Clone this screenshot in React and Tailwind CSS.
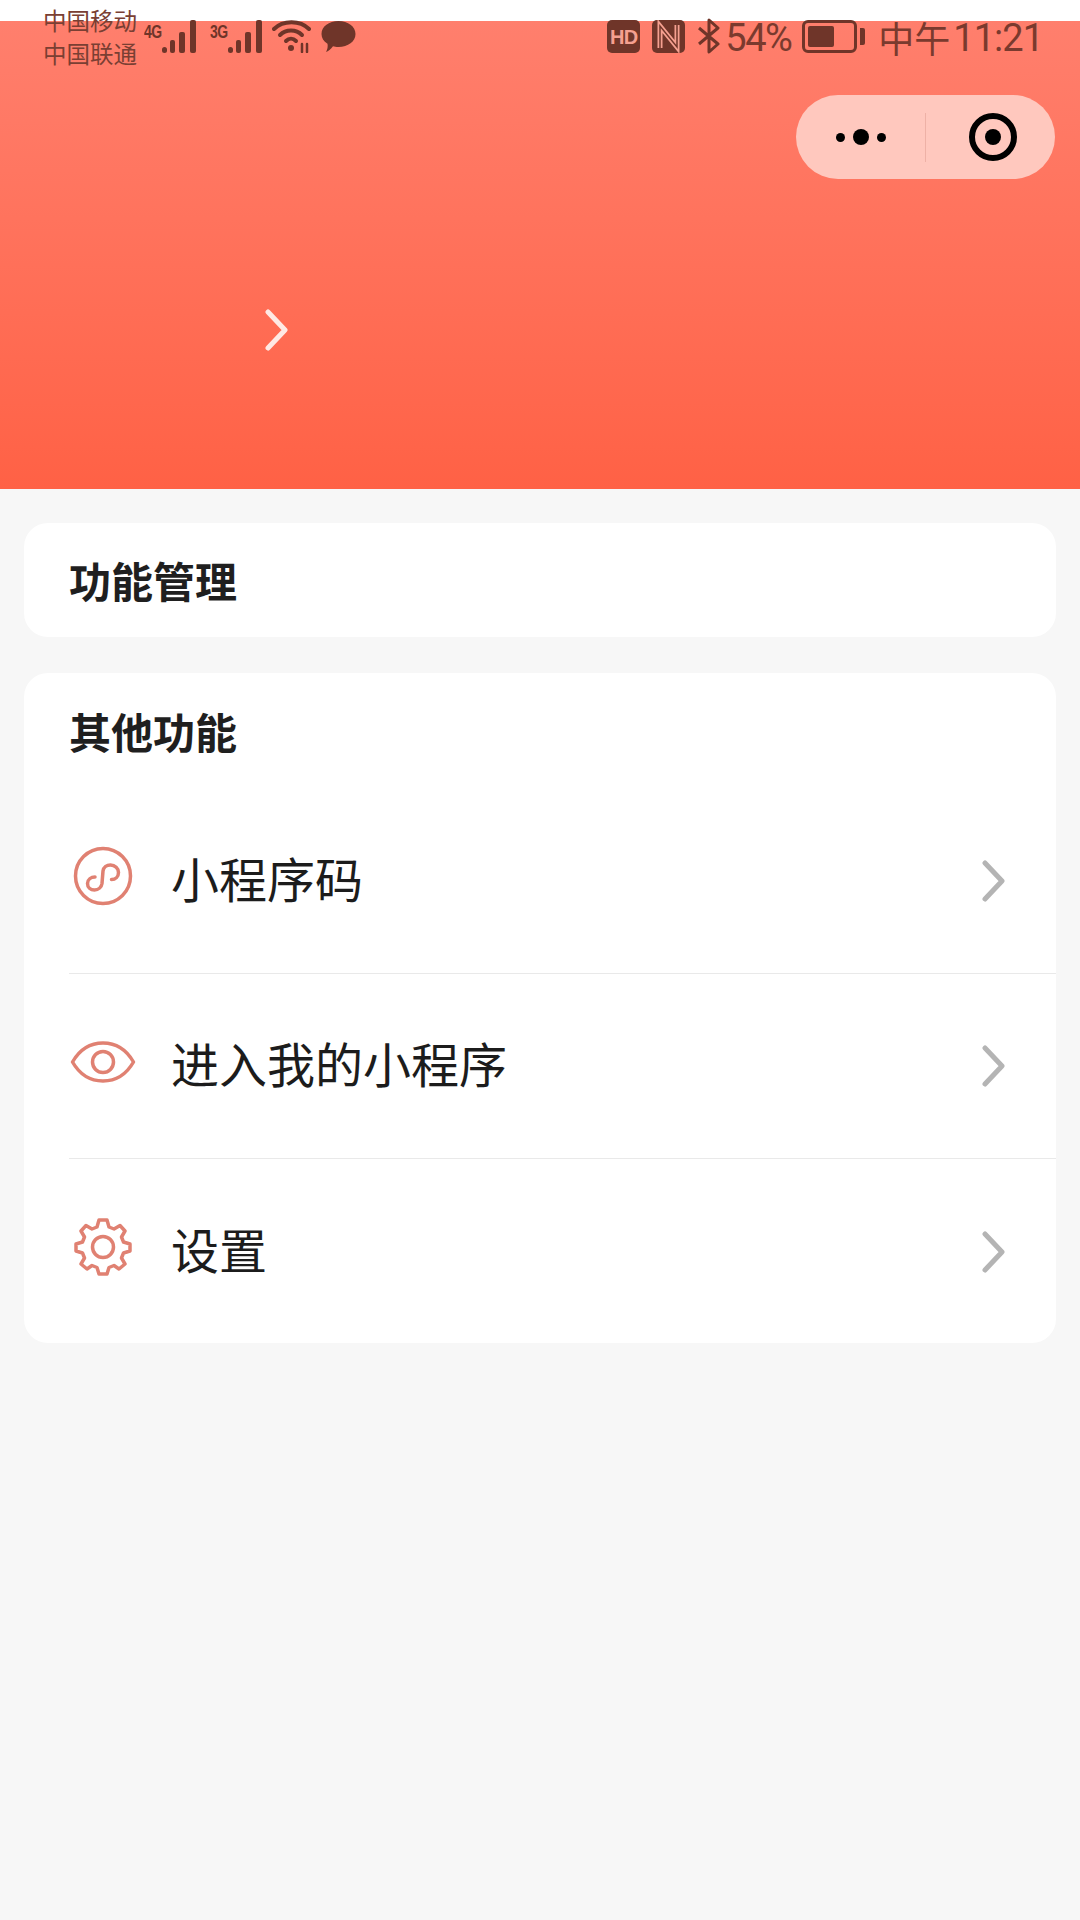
const cjk = { fontFamily: '"Noto Sans CJK SC", "Noto Sans", sans-serif' }

function Chevron({ className }) {
  return (
    <svg width="26" height="42" viewBox="0 0 26 42" fill="none" className={className}>
      <path d="M4 3 L21 21 L4 39" stroke="currentColor" strokeWidth="5" strokeLinecap="round" strokeLinejoin="round" />
    </svg>
  )
}

function Bars() {
  return (
    <svg width="35" height="33" viewBox="0 0 35 33" fill="#6f3529">
      <rect x="0" y="27" width="5" height="6" rx="2.5" />
      <rect x="8" y="20" width="5" height="13" rx="2" />
      <rect x="17" y="12" width="6" height="21" rx="2" />
      <rect x="28" y="0" width="6" height="33" rx="2" />
    </svg>
  )
}

function SignalGroup({ label }) {
  return (
    <div className="flex items-start">
      <span className="text-[14px] leading-[14px] font-bold text-[#6f3529] w-[18px] mt-[4px] tracking-[-0.5px] scale-y-[1.3]" style={{ fontFamily: '"Liberation Sans", sans-serif' }}>{label}</span>
      <Bars />
    </div>
  )
}

function StatusBar() {
  return (
    <div className="absolute top-0 left-0 right-0 h-[68px] flex items-start justify-between pl-[43px] pr-[37px] text-[#7a3a2e]" style={cjk}>
      <div className="flex items-start">
        <div className="text-[23.5px] leading-[33px] pt-[4px] w-[101px] text-[#7a3f33]">
          <div>中国移动</div>
          <div>中国联通</div>
        </div>
        <div className="flex items-start pt-[20px]">
          <SignalGroup label="4G" />
          <div className="ml-[13px]"><SignalGroup label="3G" /></div>
          <svg width="40" height="33" viewBox="0 0 40 33" fill="none" stroke="#6f3529" strokeWidth="4" strokeLinecap="round" className="ml-[9px]">
            <path d="M2 9 C11 0 28 0 37 9" />
            <path d="M8 15 C14 9 24 9 30 15" />
            <path d="M14 21 C17 18 21 18 24 21" />
            <circle cx="19" cy="28" r="3" fill="#6f3529" stroke="none" />
            <path d="M30 24 V32 M35 24 V32" strokeWidth="2.5" />
          </svg>
          <svg width="35" height="32" viewBox="0 0 35 32" fill="#6f3529" className="ml-[9px] mt-[1px]">
            <path d="M17.5 0 C27 0 34.5 5.5 34.5 13 C34.5 20.5 27 26 17.5 26 C15 26 13.5 25.7 12 25.3 C10 28 7 30.5 5 31 C6.5 28.5 7 25.5 6.5 22.8 C2.5 20.3 0.5 17 0.5 13 C0.5 5.5 8 0 17.5 0 Z" />
          </svg>
        </div>
      </div>
      <div className="flex items-start pt-[20px]">
        <div className="w-[33px] h-[33px] rounded-[5px] bg-[#6f3529] flex items-center justify-center text-[#f5a090] text-[20px] font-bold leading-none tracking-[-0.5px]" style={{ fontFamily: '"Liberation Sans", sans-serif' }}>HD</div>
        <svg width="33" height="33" viewBox="0 0 33 33" className="ml-[12px]">
          <rect width="33" height="33" rx="5" fill="#6f3529" />
          <path d="M8 28 V6 L25 27 V5" fill="none" stroke="#f5a090" strokeWidth="5" />
          <path d="M8 28 V6 L25 27 V5" fill="none" stroke="#6f3529" strokeWidth="1.5" />
        </svg>
        <svg width="24" height="36" viewBox="0 0 24 36" fill="none" stroke="#6f3529" strokeWidth="3" strokeLinejoin="round" className="ml-[12px] mt-[-2px]">
          <path d="M2 10 L21 26 L12 34 V2 L21 10 L2 26" />
        </svg>
        <span className="text-[38px] leading-[33px] ml-[4px] w-[77px] mt-[2px] tracking-[-1.5px]" style={{ fontFamily: 'Roboto, sans-serif' }}>54%</span>
        <div className="flex items-center h-[33px]">
          <div className="w-[55px] h-[33px] rounded-[6px] border-[3px] border-[#6f3529] p-[3px]">
            <div className="w-[26px] h-full bg-[#6f3529] rounded-[2px]" />
          </div>
          <div className="w-[5px] h-[17px] ml-[3px] bg-[#6f3529] rounded-r-[2px]" />
        </div>
        <span className="text-[36px] leading-[33px] ml-[13px] mt-[1px]">中午</span>
        <span className="text-[38px] leading-[33px] ml-[3px] mt-[2px] tracking-[-1px]" style={{ fontFamily: 'Roboto, sans-serif' }}>11:21</span>
      </div>
    </div>
  )
}

function Capsule() {
  return (
    <div className="absolute top-[95px] right-[25px] w-[259px] h-[84px] rounded-full bg-[#ffc8be] flex items-center">
      <div className="w-[129px] flex items-center justify-center gap-[8px]">
        <span className="w-[9px] h-[9px] rounded-full bg-black" />
        <span className="w-[16px] h-[16px] rounded-full bg-black" />
        <span className="w-[9px] h-[9px] rounded-full bg-black" />
      </div>
      <div className="w-px h-[49px] bg-[#eeb1a6]" />
      <div className="flex-1 flex items-center justify-center pl-[4px]">
        <div className="w-[48px] h-[48px] rounded-full border-[6px] border-black flex items-center justify-center">
          <span className="w-[16px] h-[16px] rounded-full bg-black" />
        </div>
      </div>
    </div>
  )
}

function MiniIcon() {
  return (
    <svg width="60" height="60" viewBox="0 0 60 60" fill="none" stroke="#e08172" strokeWidth="3.5" strokeLinecap="round">
      <circle cx="30" cy="30" r="27.5" />
      <path d="M22 31 C18 31 14.5 33.5 14.5 37.5 C14.5 41.5 17.5 44 21.5 44 C25.5 44 28.5 41 29 37.5 L30 25 C30.5 21.5 33.5 19 37.5 19 C42 19 45.5 22.5 45.5 26.5 C45.5 30.5 42.5 33.5 38.5 33.5" />
    </svg>
  )
}

function EyeIcon() {
  return (
    <svg width="66" height="44" viewBox="0 0 66 44" fill="none" stroke="#e08172" strokeWidth="3.5" className="mt-[2px]">
      <path d="M2.5 22 C10 9 21 3 33 3 C45 3 56 9 63.5 22 C56 35 45 41 33 41 C21 41 10 35 2.5 22 Z" strokeLinejoin="round" />
      <circle cx="33" cy="22" r="10.5" />
    </svg>
  )
}

function GearIcon() {
  const teeth = 'M26 3 H34 L36 10 L41 12 L47 8.5 L52 14 L48.5 20 L50.5 25 L57 27 V34 L50.5 36 L48.5 41 L52 47 L46 52 L41 48.5 L36 50.5 L34 57 H26 L24 50.5 L19 48.5 L14 52 L8 47 L11.5 41 L9.5 36 L3 34 V27 L9.5 25 L11.5 20 L8 14 L13 8.5 L19 12 L24 10 Z'
  return (
    <svg width="60" height="60" viewBox="0 0 60 60" fill="none" stroke="#e08172" strokeWidth="3.5" strokeLinejoin="round">
      <path d={teeth} />
      <circle cx="30" cy="30" r="10.5" />
    </svg>
  )
}

const rows = [
  { label: '小程序码', icon: <MiniIcon /> },
  { label: '进入我的小程序', icon: <EyeIcon /> },
  { label: '设置', icon: <GearIcon /> },
]

export default function App() {
  return (
    <div className="relative w-[1080px] h-[1920px] bg-[#f7f7f7] overflow-hidden" style={cjk}>
      <div className="h-[21px] bg-white" />
      <div className="relative h-[468px] bg-gradient-to-b from-[#ff7f6d] to-[#ff6145] pl-[264px] pt-[288px]">
        <Chevron className="text-[#ffe9e4]" />
      </div>
      <StatusBar />
      <Capsule />

      <div className="px-[24px] pt-[34px] flex flex-col gap-[36px]">
        <div className="h-[114px] bg-white rounded-[24px] pl-[45px] flex items-center">
          <h2 className="text-[42px] font-bold text-[#1f1f1f] leading-none">功能管理</h2>
        </div>

        <div className="bg-white rounded-[24px] pb-[184px]">
          <div className="h-[116px] pl-[45px] flex items-center">
            <h2 className="text-[42px] font-bold text-[#1f1f1f] leading-none">其他功能</h2>
          </div>
          {rows.map((row, i) => (
            <div key={row.label} className={`ml-[45px] h-[185px] flex items-center ${i === rows.length - 1 ? 'mb-[-185px]' : 'border-b border-[#e9e9e9]'}`}>
              <div className="w-[68px] flex justify-center mt-[-10px] mr-[34px]">{row.icon}</div>
              <span className="text-[48px] text-[#1c1c1c] leading-none flex-1 mb-[8px]">{row.label}</span>
              <Chevron className="text-[#b4b4b4] mr-[49px]" />
            </div>
          ))}
        </div>
      </div>
    </div>
  )
}
